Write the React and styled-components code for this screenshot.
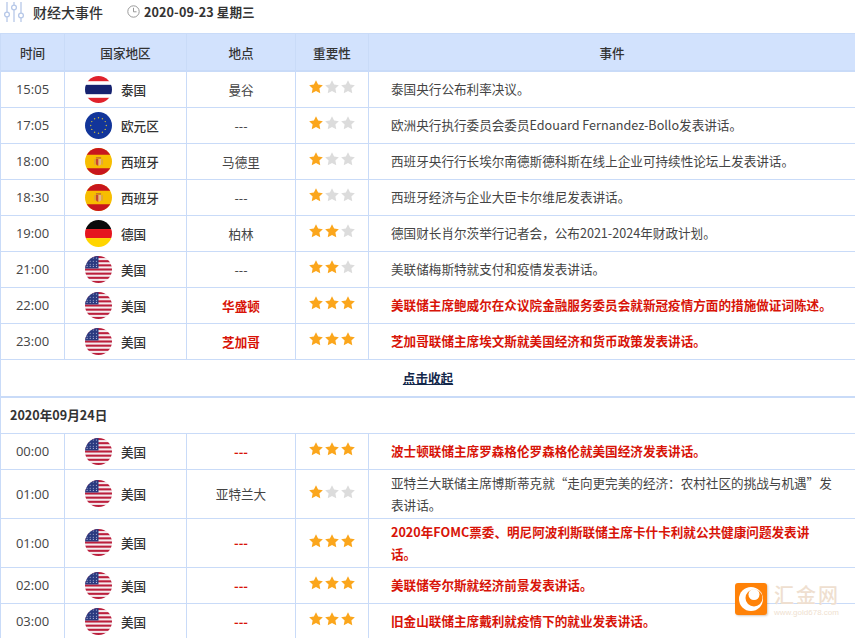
import React from "react";
import styled, { createGlobalStyle } from "styled-components";

const GlobalStyle = createGlobalStyle`
  html, body {
    margin: 0;
    padding: 0;
    background: #fff;
    overflow: hidden;
    height: 638px;
  }
  body {
    font-family: "Noto Sans CJK SC", "Noto Sans", sans-serif;
    color: #333;
  }
`;

const LINE = "#c9dbf8";

const Page = styled.div`
  position: relative;
  width: 855px;
  height: 638px;
  overflow: hidden;
`;

const TopBar = styled.div`
  display: flex;
  align-items: center;
  height: 33px;
  padding: 0 0 10px 3px;
  box-sizing: border-box;
`;

const Title = styled.span`
  font-size: 14px;
  font-weight: 500;
  margin-left: 8px;
  color: #333;
`;

const DateText = styled.span`
  font-size: 12.6px;
  font-weight: 700;
  margin-left: 4px;
  color: #333;
  letter-spacing: 0.1px;
`;

const ClockWrap = styled.span`
  display: flex;
  margin-left: 24px;
`;

const Table = styled.table`
  width: 856px;
  table-layout: fixed;
  border-collapse: collapse;
  font-size: 12.6px;
`;

const Th = styled.th`
  height: 36px;
  padding: 0;
  background: #d2e2fd;
  border: 1px solid ${LINE};
  border-bottom-width: 2px;
  font-size: 12.6px;
  font-weight: 500;
  color: #333;
`;

const Row = styled.tr`
  height: ${(p) => p.$h || 36}px;
`;

const Td = styled.td`
  padding: 0;
  border: 1px solid ${LINE};
  text-align: center;
  vertical-align: middle;
  color: ${(p) => (p.$hot ? "#d81408" : "#444")};
  font-weight: ${(p) => (p.$hot ? 700 : 400)};
`;

const TimeCell = styled(Td)`
  font-family: "Open Sans", "Noto Sans", sans-serif;
  font-size: 13px;
  color: #444;
  font-weight: 400;
`;

const CountryBox = styled.div`
  display: flex;
  align-items: center;
  padding-left: 20px;
  gap: 9px;
  font-weight: 500;
  font-size: 12.6px;
  color: #333;
`;

const EventCell = styled(Td)`
  text-align: left;
  padding: 0 22px;
  line-height: 22px;
`;

const StarRow = styled.div`
  display: flex;
  justify-content: center;
  gap: 2px;
  position: relative;
  top: -2px;
`;

const MoreCell = styled.td`
  height: 36px;
  padding: 0;
  text-align: center;
  border: 1px solid ${LINE};
  border-bottom-width: 2px;
  font-size: 12.6px;
  font-weight: 700;
  color: #14284b;
  text-decoration: underline;
`;

const DayCell = styled.td`
  height: 33px;
  padding: 0 0 2px 9px;
  border: 1px solid ${LINE};
  font-size: 12.6px;
  font-weight: 700;
  color: #333;
`;

const Watermark = styled.div`
  position: absolute;
  left: 735px;
  top: 583px;
  display: flex;
  gap: 7px;
`;

const LogoMark = styled.div`
  width: 32px;
  height: 32px;
  border-radius: 3px;
  background: #ff8208;
  display: flex;
  align-items: center;
  justify-content: center;
  box-shadow: 1px 1px 2px rgba(120, 80, 40, 0.3);
`;

const LogoText = styled.div`
  display: flex;
  flex-direction: column;
  color: #efdfd0;
`;

const LogoName = styled.span`
  font-size: 20px;
  line-height: 23px;
  letter-spacing: 2px;
  font-weight: 500;
`;

const LogoUrl = styled.span`
  font-family: "Liberation Sans", sans-serif;
  font-size: 8px;
  line-height: 9px;
  margin-top: 2px;
`;

const FlagDisc = ({ id, children }) => (
  <svg width="27" height="27" viewBox="0 0 26 26">
    <clipPath id={id}>
      <circle cx="13" cy="13" r="13" />
    </clipPath>
    <g clipPath={`url(#${id})`}>{children}</g>
  </svg>
);

const Thailand = ({ id }) => (
  <FlagDisc id={id}>
    <rect width="26" height="26" fill="#fff" />
    <rect width="26" height="5" fill="#e0222c" />
    <rect y="21" width="26" height="5" fill="#e0222c" />
    <rect y="8.500" width="26" height="9" fill="#16226f" />
  </FlagDisc>
);

const Euro = ({ id }) => (
  <FlagDisc id={id}>
    <rect width="26" height="26" fill="#12359a" />
    {Array.from({ length: 12 }).map((_, i) => (
      <circle
        key={i}
        cx={13 + 7.5 * Math.cos((i * Math.PI) / 6)}
        cy={13 + 7.5 * Math.sin((i * Math.PI) / 6)}
        r="0.7"
        fill="#c9b83e"
      />
    ))}
  </FlagDisc>
);

const Spain = ({ id }) => (
  <FlagDisc id={id}>
    <rect width="26" height="26" fill="#f7bd00" />
    <rect width="26" height="6.5" fill="#c8161d" />
    <rect y="19.5" width="26" height="6.5" fill="#c8161d" />
    <rect x="9" y="10.500" width="1" height="5.500" fill="#cf9a5a" />
    <rect x="16" y="10.500" width="1" height="5.500" fill="#cf9a5a" />
    <path d="M10.500 10.500h2.500v6.500a2.500 2.500 0 0 1-2.500-2.500z" fill="#c9452f" />
    <path d="M13 10.500h2.500v4a2.500 2.500 0 0 1-2.500 2.500z" fill="#e2b48e" />
    <rect x="10.500" y="8.800" width="5" height="1.400" fill="#c0702f" />
  </FlagDisc>
);

const Germany = ({ id }) => (
  <FlagDisc id={id}>
    <rect width="26" height="8.7" fill="#0a0a0a" />
    <rect y="8.7" width="26" height="8.7" fill="#e5161f" />
    <rect y="17.4" width="26" height="8.6" fill="#ffd500" />
  </FlagDisc>
);

const USA = ({ id }) => (
  <FlagDisc id={id}>
    <rect width="26" height="26" fill="#f5ecef" />
    {[0, 4, 8, 12, 16, 20, 24].map((y) => (
      <rect key={y} y={y} width="26" height="2" fill="#bb1f3c" />
    ))}
    <rect width="13" height="12" fill="#2b3a80" />
    {[2, 5, 8, 10].map((y) =>
      [2, 5, 8, 11].map((x) => (
        <circle key={`${x}-${y}`} cx={x} cy={y} r="0.5" fill="#c8cde6" />
      ))
    )}
  </FlagDisc>
);

const FLAGS = { th: Thailand, eu: Euro, es: Spain, de: Germany, us: USA };
const NAMES = { th: "泰国", eu: "欧元区", es: "西班牙", de: "德国", us: "美国" };

const Star = ({ on }) => (
  <svg width="14" height="14" viewBox="0 0 24 24">
    <path
      d="M12 .5l3.6 7.4 8.1 1.1-5.9 5.7 1.5 8.1-7.3-3.9-7.3 3.9 1.5-8.1L.3 9l8.1-1.1z"
      fill={on ? "#fba61c" : "#dcdcdc"}
    />
  </svg>
);

const Stars = ({ n }) => (
  <StarRow>
    {[1, 2, 3].map((i) => (
      <Star key={i} on={i <= n} />
    ))}
  </StarRow>
);

const today = [
  ["15:05", "th", "曼谷", 1, "泰国央行公布利率决议。"],
  ["17:05", "eu", "---", 1, "欧洲央行执行委员会委员Edouard Fernandez-Bollo发表讲话。"],
  ["18:00", "es", "马德里", 1, "西班牙央行行长埃尔南德斯德科斯在线上企业可持续性论坛上发表讲话。"],
  ["18:30", "es", "---", 1, "西班牙经济与企业大臣卡尔维尼发表讲话。"],
  ["19:00", "de", "柏林", 2, "德国财长肖尔茨举行记者会\uFF0C公布2021-2024年财政计划。"],
  ["21:00", "us", "---", 2, "美联储梅斯特就支付和疫情发表讲话。"],
  ["22:00", "us", "华盛顿", 3, "美联储主席鲍威尔在众议院金融服务委员会就新冠疫情方面的措施做证词陈述。"],
  ["23:00", "us", "芝加哥", 3, "芝加哥联储主席埃文斯就美国经济和货币政策发表讲话。"],
];

const tomorrow = [
  ["00:00", "us", "---", 3, "波士顿联储主席罗森格伦罗森格伦就美国经济发表讲话。"],
  ["01:00", "us", "亚特兰大", 1, "亚特兰大联储主席博斯蒂克就“走向更完美的经济\uFF1A农村社区的挑战与机遇”发表讲话。", 49],
  ["01:00", "us", "---", 3, "2020年FOMC票委、明尼阿波利斯联储主席卡什卡利就公共健康问题发表讲话。", 49],
  ["02:00", "us", "---", 3, "美联储夸尔斯就经济前景发表讲话。"],
  ["03:00", "us", "---", 3, "旧金山联储主席戴利就疫情下的就业发表讲话。"],
];

const EventRow = ({ item, rowId }) => {
  const [time, code, place, level, text, h] = item;
  const Flag = FLAGS[code];
  const hot = level === 3;
  return (
    <Row $h={h}>
      <TimeCell>{time}</TimeCell>
      <Td>
        <CountryBox>
          <Flag id={rowId} />
          {NAMES[code]}
        </CountryBox>
      </Td>
      <Td $hot={hot}>{place}</Td>
      <Td>
        <Stars n={level} />
      </Td>
      <EventCell $hot={hot}>{text}</EventCell>
    </Row>
  );
};

export default function App() {
  return (
    <Page>
      <GlobalStyle />
      <TopBar>
        <svg width="22" height="22" viewBox="0 0 22 22" fill="none" stroke="#b7c8e8" strokeWidth="1.3">
          <path d="M4 1v10M4 16v5M11 1v3M11 9v12M18 1v11M18 17v4" />
          <circle cx="4" cy="13.5" r="2.4" />
          <circle cx="11" cy="6.5" r="2.4" />
          <circle cx="18" cy="14.5" r="2.4" />
        </svg>
        <Title>财经大事件</Title>
        <ClockWrap>
          <svg width="13" height="13" viewBox="0 0 13 13" fill="none" stroke="#999" strokeWidth="1">
            <circle cx="6.5" cy="6.5" r="5.7" />
            <path d="M6.5 2.8v4h3" />
          </svg>
        </ClockWrap>
        <DateText>2020-09-23 星期三</DateText>
      </TopBar>
      <Table>
        <colgroup>
          <col style={{ width: 64 }} />
          <col style={{ width: 122 }} />
          <col style={{ width: 109 }} />
          <col style={{ width: 73 }} />
          <col />
        </colgroup>
        <thead>
          <tr>
            <Th>时间</Th>
            <Th>国家地区</Th>
            <Th>地点</Th>
            <Th>重要性</Th>
            <Th>事件</Th>
          </tr>
        </thead>
        <tbody>
          {today.map((item, i) => (
            <EventRow key={i} item={item} rowId={`a${i}`} />
          ))}
          <tr>
            <MoreCell colSpan={5}>点击收起</MoreCell>
          </tr>
          <tr>
            <DayCell colSpan={5}>2020年09月24日</DayCell>
          </tr>
          {tomorrow.map((item, i) => (
            <EventRow key={i} item={item} rowId={`b${i}`} />
          ))}
        </tbody>
      </Table>
      <Watermark>
        <LogoMark>
          <svg width="28" height="28" viewBox="0 0 28 28">
            <circle cx="14" cy="14" r="12" fill="#fff" />
            <circle cx="17" cy="13" r="8.5" fill="#ff8208" />
            <circle cx="17" cy="9.5" r="5.5" fill="#fff" />
          </svg>
        </LogoMark>
        <LogoText>
          <LogoName>汇金网</LogoName>
          <LogoUrl>www.gold678.com</LogoUrl>
        </LogoText>
      </Watermark>
    </Page>
  );
}
